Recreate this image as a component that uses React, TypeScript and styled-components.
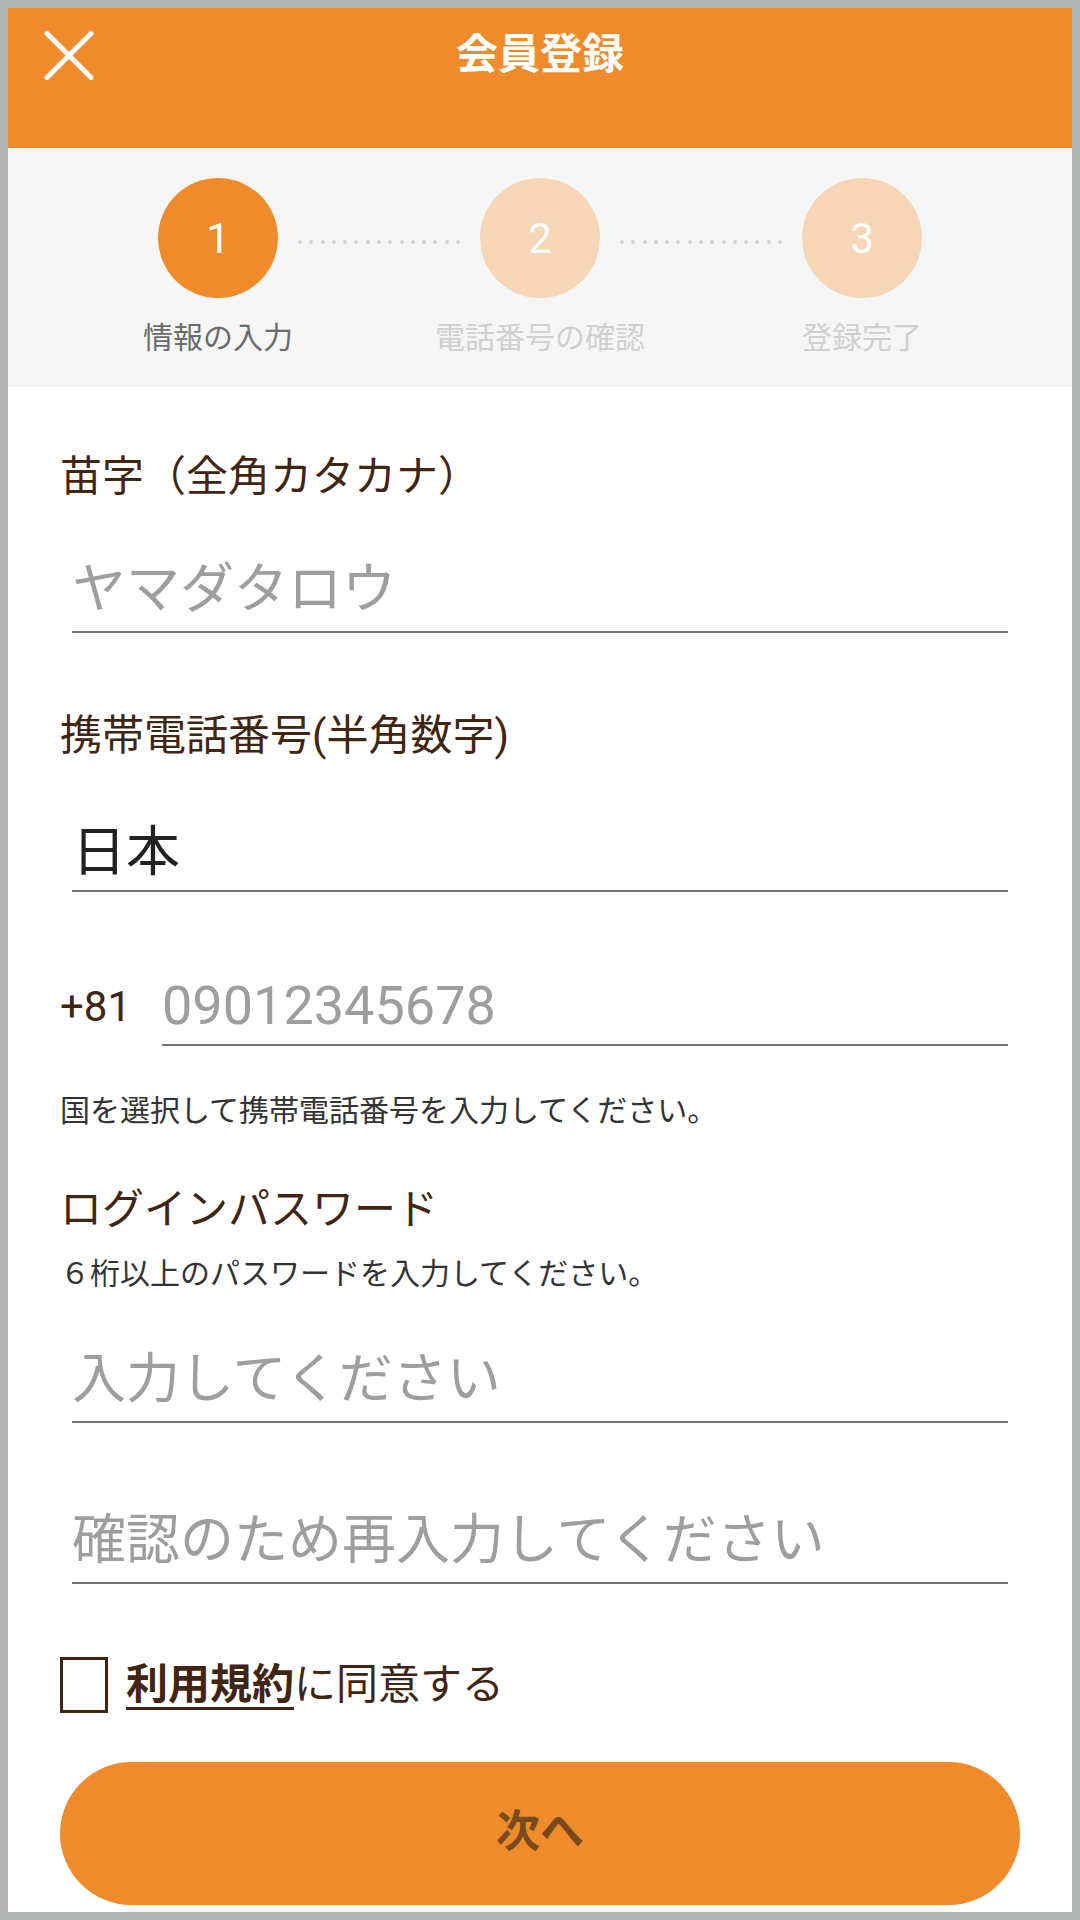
import React from "react";
import styled, { createGlobalStyle } from "styled-components";

const ORANGE = "#f08b2b";
const PEACH = "#f7d6b7";
const BROWN = "#3f2512";

const GlobalStyle = createGlobalStyle`
  html, body { padding: 0; }
  body {
    margin: 8px;
    background: #b4b6b5;
    font-family: Roboto, "Noto Sans CJK JP", sans-serif;
  }
  * { box-sizing: border-box; }
`;

const Screen = styled.div`
  background: #ffffff;
  height: 1904px;
  display: flex;
  flex-direction: column;
  overflow: hidden;
`;

const Header = styled.header`
  background: ${ORANGE};
  height: 140px;
  padding-bottom: 46px;
  display: grid;
  grid-template-columns: 1fr auto 1fr;
  align-items: center;
`;

const CloseButton = styled.button`
  justify-self: start;
  margin-left: 36px;
  width: 50px;
  height: 51px;
  padding: 0;
  border: none;
  background: none;
  display: flex;
  align-items: center;
  justify-content: center;
`;

const Title = styled.h1`
  margin: 0;
  font-size: 42px;
  line-height: 1;
  font-weight: 700;
  color: #ffffff;
`;

const Steps = styled.nav`
  background: #f6f6f6;
  height: 239px;
  padding-top: 30px;
  display: flex;
  justify-content: center;
  align-items: flex-start;
`;

const Step = styled.div`
  width: 120px;
  display: flex;
  flex-direction: column;
  align-items: center;
`;

const Circle = styled.div<{ $active?: boolean }>`
  width: 120px;
  height: 120px;
  border-radius: 50%;
  background: ${(p) => (p.$active ? ORANGE : PEACH)};
  color: #ffffff;
  font-family: Roboto, sans-serif;
  font-size: 42px;
  display: flex;
  align-items: center;
  justify-content: center;
`;

const StepLabel = styled.div<{ $active?: boolean }>`
  margin-top: 20px;
  font-size: 30px;
  line-height: 40px;
  white-space: nowrap;
  color: ${(p) => (p.$active ? "#6b6b6b" : "#d0d0d0")};
`;

const Connector = styled.div`
  width: 162px;
  margin: 62px 20px 0;
  display: flex;
  justify-content: space-between;
`;

const Dot = styled.span`
  width: 4px;
  height: 4px;
  border-radius: 50%;
  background: #d3d3d3;
`;

const Form = styled.form`
  padding: 60px 52px 0;
  display: flex;
  flex-direction: column;
`;

const Label = styled.div<{ $mt?: number }>`
  margin-top: ${(p) => p.$mt ?? 0}px;
  font-size: 42px;
  line-height: 60px;
  color: ${BROWN};
`;

const Helper = styled.p<{ $mt?: number }>`
  margin: ${(p) => p.$mt ?? 0}px 0 0;
  font-size: 30px;
  line-height: 40px;
  color: #333333;
`;

const Field = styled.label<{ $mt?: number; $pt?: number }>`
  display: flex;
  align-items: center;
  height: 86px;
  margin: ${(p) => p.$mt ?? 0}px 12px 0;
  padding-top: ${(p) => p.$pt ?? 0}px;
  border-bottom: 2px solid #737373;
`;

const TextInput = styled.input`
  flex: 1;
  min-width: 0;
  height: 64px;
  padding: 0;
  border: none;
  outline: none;
  background: transparent;
  font-family: Roboto, "Noto Sans CJK JP", sans-serif;
  font-size: 54px;
  color: #212121;
  &::placeholder {
    color: #9e9e9e;
    opacity: 1;
  }
`;

const SelectValue = styled.span`
  font-size: 54px;
  line-height: 64px;
  color: #212121;
`;

const PhoneRow = styled.div<{ $mt?: number }>`
  margin-top: ${(p) => p.$mt ?? 0}px;
  display: flex;
`;

const Prefix = styled.span`
  width: 102px;
  height: 86px;
  padding-top: 6px;
  display: flex;
  align-items: center;
  font-size: 42px;
  color: ${BROWN};
`;

const PhoneField = styled(Field)`
  flex: 1;
  margin-left: 0;
`;

const AgreeRow = styled.div<{ $mt?: number }>`
  margin-top: ${(p) => p.$mt ?? 0}px;
  height: 56px;
  display: flex;
  align-items: center;
  gap: 18px;
`;

const CheckBox = styled.span`
  width: 48px;
  height: 56px;
  border: 3px solid ${BROWN};
  background: #ffffff;
`;

const AgreeText = styled.span`
  font-size: 42px;
  line-height: 56px;
  color: ${BROWN};
`;

const TermsLink = styled.a`
  font-weight: 700;
  color: ${BROWN};
  text-decoration: underline;
  text-decoration-thickness: 3px;
  text-underline-offset: 8px;
`;

const NextButton = styled.button<{ $mt?: number }>`
  margin-top: ${(p) => p.$mt ?? 0}px;
  width: 100%;
  height: 143px;
  border: none;
  border-radius: 72px;
  background: ${ORANGE};
  color: #7b4a1c;
  font-family: Roboto, "Noto Sans CJK JP", sans-serif;
  font-size: 44px;
  font-weight: 700;
  padding: 0 0 12px;
`;

const CloseIcon = () => (
  <svg width="50" height="51" viewBox="0 0 50 51" aria-hidden="true">
    <path
      d="M3 3.5 L47 47.5 M47 3.5 L3 47.5"
      stroke="#ffffff"
      strokeWidth="5"
      strokeLinecap="round"
      fill="none"
    />
  </svg>
);

const Dots = () => (
  <Connector>
    {Array.from({ length: 15 }).map((_, i) => (
      <Dot key={i} />
    ))}
  </Connector>
);

const steps = [
  { n: "1", label: "情報の入力", active: true },
  { n: "2", label: "電話番号の確認", active: false },
  { n: "3", label: "登録完了", active: false },
];

export default function App() {
  return (
    <>
      <GlobalStyle />
      <Screen>
        <Header>
          <CloseButton aria-label="閉じる">
            <CloseIcon />
          </CloseButton>
          <Title>会員登録</Title>
          <span />
        </Header>

        <Steps>
          {steps.map((s, i) => (
            <React.Fragment key={s.n}>
              {i > 0 && <Dots />}
              <Step>
                <Circle $active={s.active}>{s.n}</Circle>
                <StepLabel $active={s.active}>{s.label}</StepLabel>
              </Step>
            </React.Fragment>
          ))}
        </Steps>

        <Form onSubmit={(e) => e.preventDefault()}>
          <Label>苗字（全角カタカナ）</Label>
          <Field $mt={40}>
            <TextInput placeholder="ヤマダタロウ" />
          </Field>

          <Label $mt={73}>携帯電話番号(半角数字)</Label>
          <Field $mt={40} $pt={10}>
            <SelectValue>日本</SelectValue>
          </Field>

          <PhoneRow $mt={68}>
            <Prefix>+81</Prefix>
            <PhoneField $pt={6}>
              <TextInput placeholder="09012345678" inputMode="numeric" />
            </PhoneField>
          </PhoneRow>

          <Helper $mt={45}>国を選択して携帯電話番号を入力してください。</Helper>

          <Label $mt={49}>ログインパスワード</Label>
          <Helper $mt={14}>６桁以上のパスワードを入力してください。</Helper>
          <Field $mt={43}>
            <TextInput type="password" placeholder="入力してください" />
          </Field>
          <Field $mt={75}>
            <TextInput type="password" placeholder="確認のため再入力してください" />
          </Field>

          <AgreeRow $mt={73}>
            <CheckBox role="checkbox" aria-checked="false" />
            <AgreeText>
              <TermsLink href="#">利用規約</TermsLink>に同意する
            </AgreeText>
          </AgreeRow>

          <NextButton $mt={49} type="submit">
            次へ
          </NextButton>
        </Form>
      </Screen>
    </>
  );
}
